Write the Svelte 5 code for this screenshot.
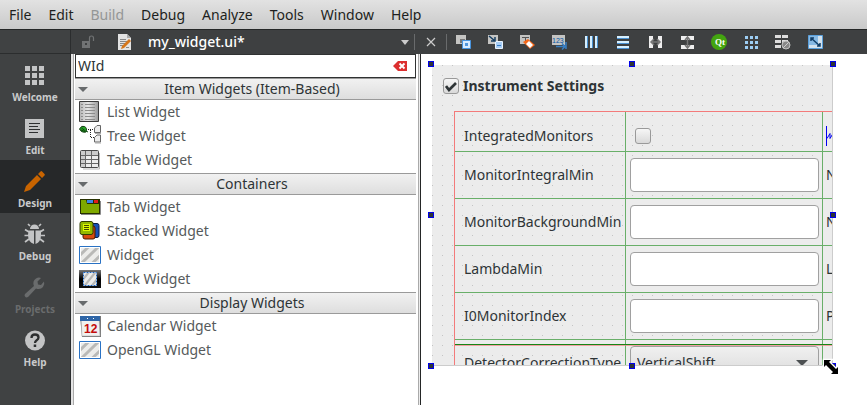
<script>
  let search = $state('WId');
  let enabled = $state(true);

  const menus = ['File', 'Edit', 'Build', 'Debug', 'Analyze', 'Tools', 'Window', 'Help'];
  const modes = ['Welcome', 'Edit', 'Design', 'Debug', 'Projects', 'Help'];
  const groups = [
    { title: 'Item Widgets (Item-Based)', items: ['List Widget', 'Tree Widget', 'Table Widget'] },
    { title: 'Containers', items: ['Tab Widget', 'Stacked Widget', 'Widget', 'Dock Widget'] },
    { title: 'Display Widgets', items: ['Calendar Widget', 'OpenGL Widget'] }
  ];
  const tools = [
    'Edit Widgets', 'Edit Signals/Slots', 'Edit Buddies', 'Edit Tab Order',
    'Lay Out Horizontally', 'Lay Out Vertically', 'Horizontal Splitter', 'Vertical Splitter',
    'Form Layout', 'Grid Layout', 'Break Layout', 'Adjust Size'
  ];
  const fields = [
    { name: 'MonitorIntegralMin', next: 'N' },
    { name: 'MonitorBackgroundMin', next: 'N' },
    { name: 'LambdaMin', next: 'L' },
    { name: 'I0MonitorIndex', next: 'P' }
  ];
  const handles = ['tl', 'tc', 'tr', 'ml', 'mr', 'bl', 'bc', 'br'];
</script>

{#snippet modeIcon(name)}
  <svg width="24" height="24" viewBox="0 0 24 24" fill="#c3c4c5" aria-hidden="true">
    {#if name === 'Welcome'}
      {#each [2, 9, 16] as y}
        {#each [2, 9, 16] as x}<rect {x} {y} width="5" height="5" />{/each}
      {/each}
    {:else if name === 'Edit'}
      <path d="M2 2h19v19H2z" />
      <path d="M6 6.500h11M6 9.500h9M6 12.500h11M6 15.500h9" stroke="#2d2f30" stroke-width="1.200" />
    {:else if name === 'Design'}
      <path fill="#c86400" d="M1 22 3 16 14 5l4 4L7 20zM15 4l2.500-2.500q.8-.8 1.600 0l2.400 2.400q.8.8 0 1.600L19 8z" />
    {:else if name === 'Debug'}
      <path d="M7 6a4.500 4.500 0 0 1 9 0z" />
      <path d="M5.500 7.500h5.500V21Q5 19 5 12zM12.500 7.500H18V12q0 7-5.500 9z" />
      <path d="m7 3-2-2m11 2 2-2M6 9 2 6.500M17 9l4-2.500M6 12.500H1.500m16 0H22M6 16l-4 3m15-3 4 3" stroke="#c3c4c5" stroke-width="1.700" />
    {:else if name === 'Projects'}
      <path fill="#6a6c6d" d="M2 18 11 10q-2-5 2-7.500 2.500-1.500 5-.5l-3.500 3.500.5 3 3 .5L21 5.500q1 3-1 5.500-2.500 3-7 1.500L5 21q-2 1-3-.5-1-1.200 0-2.500z" />
    {:else}
      <circle cx="12" cy="11.500" r="10" />
      <path d="M8.500 9q0-3.500 3.500-3.500t3.500 3q0 1.500-1.800 2.700Q12 12.300 12 14" fill="none" stroke="#2d2f30" stroke-width="2.300" />
      <path fill="#2d2f30" d="M10.700 15.500h2.500V18h-2.500z" />
    {/if}
  </svg>
{/snippet}

{#snippet stripes(x, y, w, h)}
  <svg {x} {y} width={w} height={h} viewBox="0 0 20 16" preserveAspectRatio="none">
    <path fill="#ececea" d="M0 0h20v16H0z" />
    <path d="M-2 9 9-2M-2 20 20-2M8 22 26 4" stroke="#b9b9b7" stroke-width="3.300" />
  </svg>
{/snippet}

{#snippet widgetIcon(name)}
  <svg width="22" height="22" viewBox="0 0 22 22" aria-hidden="true">
    {#if name === 'List Widget'}
      <path fill="url(#steel)" stroke="#3b3b3b" d="M.5.5h19v20H.5z" />
      <path d="M2 3.500h2m2 0h10M2 6.500h2m2 0h10M2 9.500h2m2 0h10M2 12.500h2m2 0h10M2 15.500h2m2 0h10M2 18.500h2m2 0h10" stroke="#8c8c8c" />
    {:else if name === 'Tree Widget'}
      <path fill="#29a329" stroke="#173d17" d="M.5 4q2-4 5-2.500Q8.500 3 7 7 2.500 8 .5 4z" />
      <path d="m2.500 3 4 3M2 5l4 1.500M7 6l2 1" stroke="#0c4b0c" />
      <path d="M9 4.500h5M11.500 5v8M12 12.500h3" fill="none" stroke="#222" stroke-dasharray="1 1" />
      <path fill="#ececec" stroke="#666" d="M15.500 3 18 .5h3.500v7h-6zM15.500 12.500 18 10h3.500v7h-6z" />
      <path d="M16 8.500h6M16 18h6" stroke="#aaa" />
    {:else if name === 'Table Widget'}
      <path d="M4 20h16.500V4" fill="none" stroke="#bbb" />
      <rect x="1.500" y="1.500" width="18" height="17" rx="1" fill="#ececec" stroke="#484848" />
      <path fill="#ccc" d="M2 2h17v4H2zM2 6h4v12H2z" />
      <path d="M2 6.500h17M2 10.500h17M2 14.500h17M6.500 2v16M12.500 2v16" stroke="#666" />
    {:else if name === 'Tab Widget'}
      <path fill="#263000" d="M1 3h20v15H1z" />
      <path fill="#3c88e8" d="M8 4h6v3H8z" /><path fill="#e21b1b" d="M15 4h4v3h-4z" />
      <path fill="#7fa900" d="M2 4h5l1 4h12v9H2z" />
      <path d="M2 18.500h19.500V5" stroke="#888" fill="none" />
    {:else if name === 'Stacked Widget'}
      <rect x="9" y="3.500" width="11" height="14" rx="2" fill="#1751b6" stroke="#0c1d48" />
      <rect x="4" y="6" width="12" height="13" rx="2" fill="#d74a10" stroke="#4c1800" />
      <rect x="1" y="1.500" width="13" height="13" rx="2" fill="#93b800" stroke="#303c00" />
      <path fill="#dcf800" d="M4 4h7v7H4z" /><path d="M5 5.500h5M5 7.500h5M5 9.500h5" stroke="#414900" />
    {:else if name === 'Dock Widget'}
      <path fill="url(#dock)" d="M0 2h22v18H0z" />
      {@render stripes(5, 5, 12, 12)}
      <path d="M4.500 4.500h13v13h-13z" fill="none" stroke="#fff" />
      <path d="M4.500 4.500h13v13h-13z" fill="none" stroke="#1c63bb" stroke-dasharray="2 1" />
    {:else if name === 'Calendar Widget'}
      <path fill="#777" d="M1 1h21v21H3z" />
      <path fill="#f0f0ef" stroke="#aaa" stroke-width=".5" d="M2 2h18l1 19H3z" />
      <path fill="#2e65a7" d="M1 1h20v5H1z" /><path d="M8 3.500h1m5 0h1" stroke="#fff" />
      <text x="5" y="18" fill="#c40b0b" font-size="12" font-weight="700" font-family="Liberation Sans, sans-serif">12</text>
    {:else}
      <path fill="#fff" stroke="#2a72c4" d="M.5 2.500h21v17H.5z" />
      {@render stripes(2, 4, 18, 14)}
    {/if}
  </svg>
{/snippet}

{#snippet toolIcon(i)}
  <svg width="16" height="16" viewBox="0 0 16 16" aria-hidden="true">
    {#if i === 0}
      <path fill="#c4c4c2" d="M1 1h10v9H1z" /><path fill="#777" d="M5 5h5v4H5z" />
      <path fill="#d7eaff" stroke="#4894df" d="M7.500 6.500h8v8h-8z" /><path fill="#5197dd" d="M10 9h3v3h-3z" />
    {:else if i === 1}
      <path fill="#c4c4c2" d="M1 1h10v9H1z" /><path fill="#a7cdf5" stroke="#e8f4ff" d="M8.500 7.500h7v7h-7z" />
      <path d="m2 2 6 5M8 3v4H4" fill="none" stroke="#163e62" stroke-width="1.500" /><path d="M10 11.500h4" stroke="#347cc7" />
    {:else if i === 2}
      <path fill="#c4c4c2" d="M1 1h10v9H1z" /><path d="M3 3.500h7M6.500 4v4" stroke="#555" />
      <path fill="#f46719" d="m4 8 5-3 7 6-5 4z" /><path fill="#fff" d="m7 10 3-3 4 4-3 3z" />
    {:else if i === 3}
      <path fill="#c4c4c2" d="M1 1h13v10H1z" />
      <text x="1" y="9" font-size="7" font-family="Liberation Sans, sans-serif" fill="#0754a4">123</text>
      <path d="M5 12.500h8m-2-3 3 3-3 3M15 8v7" fill="none" stroke="#397fc4" stroke-width="1.500" />
    {:else if i === 4}
      <path fill="#4b91d0" d="M2 2h3v12H2zM7 2h3v12H7zM12 2h3v12h-3z" /><path d="M3 2v12M8 2v12M13 2v12" stroke="#d5efff" stroke-width="2" />
    {:else if i === 5}
      <path fill="#4b91d0" d="M2 2h12v3H2zM2 7h12v3H2zM2 12h12v3H2z" /><path d="M2 3h12M2 8h12M2 13h12" stroke="#d5efff" stroke-width="2" />
    {:else if i === 6}
      <path fill="#eee" d="M2 2h4v12H2zM11 2h4v12h-4z" /><path d="M4 8h9M7 5 4 8l3 3m3-6 3 3-3 3" fill="none" stroke="#777" stroke-width="1.500" />
    {:else if i === 7}
      <path fill="#eee" d="M2 2h13v4H2zM2 11h13v4H2z" /><path d="M8.500 4v9M6 6l2.500-3L11 6m-5 5 2.500 3 2.500-3" fill="none" stroke="#777" stroke-width="1.500" />
    {:else if i === 8}
      <circle cx="8" cy="8" r="8" fill="#43a510" />
      <text x="4" y="11" font-size="9" font-weight="700" font-family="Liberation Serif, serif" fill="#fff">Qt</text>
    {:else if i === 9}
      {#each [2, 7, 12] as y}{#each [2, 7, 12] as x}<rect {x} {y} width="3" height="3" fill="#9dcef4" />{/each}{/each}
    {:else if i === 10}
      <path fill="#ddd" d="M0 1h6v3H0zM7 1h6v3H7zM0 6h6v3H0zM7 6h6v3H7zM0 11h6v3H0z" />
      <circle cx="11" cy="11" r="4" fill="#888" stroke="#c2c2c2" /><path d="m8 14 6-6" stroke="#ccc" />
    {:else}
      <path fill="#d3e2ee" stroke="#5aa0dc" d="M1.500 1.500h14v13h-14z" /><path fill="#86b9e4" d="M2 2h9v9H2z" />
      <path d="m4 4 9 8M4 7V4h3m6 5v3h-3" fill="none" stroke="#113e68" stroke-width="1.500" />
    {/if}
  </svg>
{/snippet}

<div class="app">
  <svg class="defs" width="0" height="0" aria-hidden="true">
    <linearGradient id="steel"><stop stop-color="#b5b5b5" /><stop offset=".45" stop-color="#e6e6e6" /><stop offset="1" stop-color="#9a9a9a" /></linearGradient>
    <linearGradient id="dock" x2="0" y2="1"><stop stop-color="#777" /><stop offset=".5" /><stop offset="1" stop-color="#111" /></linearGradient>
  </svg>

  <nav class="menubar">
    {#each menus as menu}<button disabled={menu === 'Build'}>{menu}</button>{/each}
  </nav>

  <div class="body">
    <nav class="modes">
      <div class="corner"></div>
      {#each modes as mode}
        <button class:active={mode === 'Design'} disabled={mode === 'Projects'}>
          {@render modeIcon(mode)}<span>{mode}</span>
        </button>
      {/each}
    </nav>

    <main>
      <div class="toolbar">
        <div class="file">
          <svg class="lock" width="14" height="16" viewBox="0 0 14 16" aria-hidden="true">
            <path fill="#717374" fill-rule="evenodd" d="M1 7h8v7H1zm3 2v2h2V9z" /><path d="M8.500 7V4q0-2 2-2t2 2v3" fill="none" stroke="#717374" stroke-width="1.200" />
          </svg>
          <svg width="16" height="18" viewBox="0 0 16 18" aria-hidden="true">
            <path fill="#e3e3e3" d="M1 1h9l4 4v12H1z" /><path fill="#aaa" d="M10 1v4h4z" />
            <path d="M3 6.500h6M3 8.500h8M3 10.500h6M3 12.500h4M9 14.500h3" stroke="#888" />
            <path fill="#d5771b" d="m4 16 1-3 7-7 2 2-7 7z" />
          </svg>
          <button class="filename">my_widget.ui*<i></i></button>
        </div>
        <button class="close" aria-label="Close document">
          <svg width="10" height="10" viewBox="0 0 10 10" aria-hidden="true"><path d="m1 1 8 8m0-8-8 8" stroke="#ccc" stroke-width="1.200" /></svg>
        </button>
        <div class="tools">
          {#each tools as tool, i}<button aria-label={tool}>{@render toolIcon(i)}</button>{/each}
        </div>
      </div>

      <div class="workspace">
        <aside>
          <div class="search">
            <input type="text" aria-label="Filter" bind:value={search} />
            <button aria-label="Clear filter" onclick={() => (search = '')}>
              <svg width="14" height="10" viewBox="0 0 14 10" aria-hidden="true"><path fill="#dc2f2f" d="M5 0h9v10H5L0 5z" /><path d="m6.500 2.500 5 5m0-5-5 5" stroke="#fff" stroke-width="1.900" /></svg>
            </button>
          </div>
          {#each groups as group}
            <section>
              <h2><i></i>{group.title}</h2>
              <ul>
                {#each group.items as item}<li>{@render widgetIcon(item)}<span>{item}</span></li>{/each}
              </ul>
            </section>
          {/each}
        </aside>

        <div class="canvas">
          <div class="selection">
            <form>
              <label class="group-title"><input class="check" type="checkbox" bind:checked={enabled} />Instrument Settings</label>
              <div class="layout">
                <div class="row first">
                  <label for="integrated">IntegratedMonitors</label>
                  <div class="cell"><input id="integrated" class="check" type="checkbox" /></div>
                  <div class="next">
                    <svg width="10" height="20" viewBox="0 0 10 20" aria-hidden="true"><path d="M.5 0v20M1 12.500l3-5v5l3-5v5l3-5" fill="none" stroke="#0000f0" /></svg>
                  </div>
                </div>
                {#each fields as field}
                  <div class="row">
                    <label for={field.name}>{field.name}</label>
                    <div class="cell"><input id={field.name} type="text" /></div>
                    <div class="next">{field.next}</div>
                  </div>
                {/each}
                <div class="row gap"><span></span><span></span><span></span></div>
                <div class="row last">
                  <label for="correction">DetectorCorrectionType</label>
                  <div class="cell">
                    <select id="correction"><option>VerticalShift</option></select><i></i>
                  </div>
                  <div class="next"></div>
                </div>
              </div>
            </form>
            {#each handles as handle}<b class="handle {handle}"></b>{/each}
            <svg class="cursor" width="18" height="18" viewBox="0 0 18 18" aria-hidden="true">
              <path d="M2 2h7L7 4l7 7 2-2v7H9l2-2-7-7-2 2z" stroke="#fff" stroke-width="2.500" />
              <path d="M2 2h7L7 4l7 7 2-2v7H9l2-2-7-7-2 2z" />
            </svg>
          </div>
        </div>
      </div>
    </main>
  </div>
</div>

<style>
  :global(body) { margin: 0; }
  * { box-sizing: border-box; }
  .app { display: flex; flex-direction: column; height: 100vh; overflow: hidden; font: 14px/20px "Noto Sans", sans-serif; color: #2e3436; background: #fff; }
  .defs { position: absolute; }
  button { padding: 0; border: 0; background: none; font: inherit; color: inherit; }
  svg { display: block; flex: none; }

  .menubar { display: flex; flex: none; gap: 17px; height: 30px; padding: 0 9px; border-bottom: 1px solid #242626; background: linear-gradient(#e2e2e2, #c9c9c9); color: #1d1f20; }
  .menubar button:disabled { color: #949696; }

  .body { display: flex; flex: 1; min-height: 0; }
  .modes { flex: none; width: 71px; background: #404243; border-right: 1px solid #2b2d2e; }
  .corner { height: 24px; border-bottom: 1px solid #2b2d2e; }
  .modes button { display: flex; flex-direction: column; align-items: center; gap: 2px; width: 100%; height: 53px; padding-top: 10px; color: #c9cacb; font-size: 10px; font-weight: 700; line-height: 14px; }
  .modes button.active { background: #262829; }
  .modes button:disabled { color: #6a6c6d; }

  main { display: flex; flex: 1; flex-direction: column; min-width: 0; }
  .toolbar { display: flex; flex: none; align-items: center; height: 24px; background: #3e4041; color: #fff; }
  .file { display: flex; align-items: center; width: 344px; height: 16px; padding-left: 10px; border-right: 1px solid #696b6c; }
  .lock { margin-right: 22px; }
  .filename { display: flex; flex: 1; align-items: center; justify-content: space-between; padding: 0 5px 0 15px; font-weight: 500; }
  .filename i { border: 4px solid transparent; border-top: 5px solid #ccc; border-bottom: 0; }
  .close { display: flex; align-items: center; justify-content: center; width: 32px; height: 16px; border-right: 1px solid #696b6c; }
  .tools { display: flex; gap: 16px; padding-left: 8px; }

  .workspace { display: flex; flex: 1; min-height: 0; }
  aside { flex: none; width: 350px; padding: 0 4px 0 4px; border-right: 1px solid #242626; background: linear-gradient(90deg, #e4e4e4 2px, #aaa 2px 3px, #fff 3px 347px, #aaa 347px 348px, #ececec 348px); }
  .search { display: flex; align-items: center; height: 24px; padding: 0 8px 0 2px; border: 1px solid #303232; background: #fff; }
  .search input { flex: 1; min-width: 0; padding: 0; border: 0; outline: 0; background: none; font: inherit; color: inherit; }
  h2 { display: flex; align-items: center; justify-content: center; height: 22px; margin: 0; border: solid #9a9a9a; border-width: 1px 0; background: linear-gradient(#f1f1f1, #dedede); font-size: 14px; font-weight: 400; line-height: 20px; }
  h2 i { margin: 0 auto 0 3px; border: 5px solid transparent; border-top: 5px solid #676a6c; border-bottom: 0; }
  h2::after { content: ""; margin-right: auto; }
  ul { margin: 0; padding: 0 0 1px; list-style: none; }
  li { display: flex; align-items: center; gap: 6px; height: 24px; padding-left: 4px; color: #565a5b; }

  .canvas { flex: 1; min-width: 0; padding: 11px 34px 39px 11px; }
  .selection { position: relative; height: 100%; }
  form { height: 100%; overflow: hidden; padding-top: 11px; border: solid #ccc; border-width: 0 1px 1px 0; background: #ececec radial-gradient(circle at 0 0, #c4c4c4 1px, transparent 1px) 0 0 / 10px 10px; }
  .group-title { display: flex; align-items: center; gap: 4px; height: 20px; padding-left: 11px; font-weight: 700; }
  .check { appearance: none; flex: none; width: 16px; height: 16px; margin: 0; border: 1px solid #999; border-radius: 3px; background: linear-gradient(#f6f6f6, #d9d9d9); }
  .check:checked { background: no-repeat center / 12px 12px url("data:image/svg+xml,%3Csvg xmlns='http://www.w3.org/2000/svg' viewBox='0 0 12 12'%3E%3Cpath d='m1 6 3 4 7-7' fill='none' stroke='%232e3436' stroke-width='2.700'/%3E%3C/svg%3E"), linear-gradient(#f6f6f6, #d9d9d9); }
  .layout { margin: 15px 0 0 22px; border: solid #f37a7a; border-width: 1px 0 0 1px; }
  .row { display: grid; grid-template-columns: 171px 1fr 9px; height: 47px; border-bottom: 1px solid #69af69; }
  .row > :not(:last-child) { border-right: 1px solid #69af69; }
  .row > label { display: flex; align-items: center; padding-left: 9px; white-space: nowrap; }
  .cell { position: relative; display: flex; align-items: center; min-width: 0; padding: 0 3px 0 4px; }
  .cell input[type="text"] { width: 100%; height: 34px; border: 1px solid #a0a0a0; border-radius: 4px; background: #fff; font: inherit; }
  .next { display: flex; align-items: center; padding-left: 3px; overflow: hidden; }
  .row.first { height: 40px; }
  .row.first > * { padding-top: 9px; }
  .row.first > .cell { padding-left: 9px; }
  .row.gap { height: 5px; border-color: #178517; }
  .row.last { height: 34px; }
  .row.last > * { border-top: 1px solid #f0a0a0; }
  .last select { appearance: none; width: 100%; height: 34px; padding: 0 6px; border: 1px solid #a0a0a0; border-radius: 4px; background: linear-gradient(#f0f0f0, #d9d9d9); font: inherit; color: inherit; }
  .cell i { position: absolute; right: 14px; top: 14px; border: 6px solid transparent; border-top: 6px solid #4c5052; border-bottom: 0; }

  .handle { position: absolute; width: 6px; height: 6px; border: 1px solid #0000e8; background: #2e3436; }
  .tl, .tc, .tr { top: -4px; }
  .ml, .mr { top: calc(50% - 4px); }
  .bl, .bc, .br { bottom: -3px; }
  .tl, .ml, .bl { left: -4px; }
  .tc, .bc { left: calc(50% - 4px); }
  .tr, .mr, .br { right: -3px; }
  .cursor { position: absolute; right: -7px; bottom: -10px; }
</style>
